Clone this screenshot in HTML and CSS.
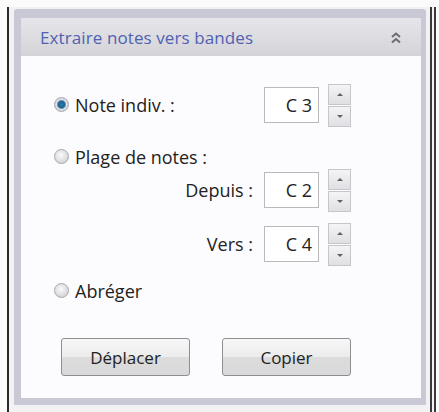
FILE: index.html
```html
<!DOCTYPE html>
<html lang="fr">
<head>
<meta charset="utf-8">
<title>Extraire notes vers bandes</title>
<link rel="stylesheet" href="styles.css">
</head>
<body>
<div class="window">
  <div class="gap">
    <div class="panel">
      <div class="header">
        <span class="title">Extraire notes vers bandes</span>
        <svg class="chev" width="12" height="14" viewBox="0 0 12 14"><path d="M2 6 L6 2.5 L10 6 M2 11.5 L6 8 L10 11.5" fill="none" stroke="#6b6b70" stroke-width="2"/></svg>
      </div>
      <div class="content">
        <div class="row r1">
          <span class="radio on"></span>
          <span class="label">Note indiv. :</span>
          <div class="field"><span class="input">C 3</span><span class="spin"><span class="sb up"></span><span class="sb down"></span></span></div>
        </div>
        <div class="row r2">
          <span class="radio"></span>
          <span class="label">Plage de notes :</span>
        </div>
        <div class="row r3">
          <span class="sublabel">Depuis :</span>
          <div class="field"><span class="input">C 2</span><span class="spin"><span class="sb up"></span><span class="sb down"></span></span></div>
        </div>
        <div class="row r4">
          <span class="sublabel">Vers :</span>
          <div class="field"><span class="input">C 4</span><span class="spin"><span class="sb up"></span><span class="sb down"></span></span></div>
        </div>
        <div class="row r5">
          <span class="radio"></span>
          <span class="label">Abréger</span>
        </div>
        <div class="buttons">
          <button class="btn">Déplacer</button>
          <button class="btn">Copier</button>
        </div>
      </div>
    </div>
  </div>
</div>
</body>
</html>
```
FILE: styles.css
```css
html, body {
  margin: 0;
  padding: 0;
  background: #fbfbfb;
  font-family: "Open Sans", "Noto Sans", sans-serif;
  color: #222;
}
.window {
  margin: 7px 3px 0 7px;
  height: 405px;
  border-left: 2px solid #2a2a2a;
  border-right: 6px double #3a3a3a;
  background: #f2f2f4;
  box-sizing: border-box;
}
.gap {
  padding: 2px 4px 0 5px;
  height: 100%;
  box-sizing: border-box;
}
.panel {
  background: #c9c9d6;
  padding: 9px 5px 7px 7px;
  border-radius: 3px 3px 0 0;
  height: 396px;
  box-sizing: border-box;
  display: flex;
  flex-direction: column;
}
.header {
  height: 38px;
  background: linear-gradient(#e6e6ea, #d3d3d8);
  display: flex;
  align-items: center;
  justify-content: space-between;
  padding: 0 19px 0 19px;
  flex: none;
}
.title {
  color: #4f62b2;
  font-size: 17px;
  letter-spacing: 0.1px;
  margin-top: 1px;
}
.chev {
  display: block;
  margin-top: 1px;
}
.content {
  flex: 1;
  background: #fcfcfe;
  padding: 27px 70px 0 33px;
}
.row {
  display: flex;
  align-items: center;
}
.r1 { height: 44px; }
.r2 { height: 20px; margin-top: 20px; }
.r3 { height: 42px; margin-top: 2px; }
.r4 { height: 42px; margin-top: 12px; }
.r5 { height: 20px; margin-top: 16px; }
.radio {
  width: 13px;
  height: 13px;
  border-radius: 50%;
  border: 1px solid #a8a8ae;
  background: radial-gradient(circle at 45% 40%, #fafafa 0%, #dcdcde 60%, #c4c4c8 100%);
  flex: none;
  margin-top: -2px;
}
.radio.on {
  background: radial-gradient(circle at 50% 50%, #2f7fb4 0, #1d5f8f 3px, #8fb3cc 4.5px, #dfe4e8 5px, #c8cbcf 7px);
}
.label {
  font-size: 18px;
  margin-left: 6px;
  flex: 1;
}
.sublabel {
  font-size: 18px;
  margin-left: auto;
  margin-right: 11px;
}
.field {
  display: flex;
  align-items: center;
}
.input {
  width: 55px;
  height: 36px;
  box-sizing: border-box;
  border: 1px solid #b9b9bd;
  background: #fff;
  font-size: 18px;
  text-align: right;
  padding-right: 6px;
  line-height: 34px;
}
.spin {
  display: flex;
  flex-direction: column;
  margin-left: 9px;
  gap: 1px;
}
.sb {
  width: 23px;
  height: 21px;
  box-sizing: border-box;
  border: 1px solid #c6c6ca;
  background: linear-gradient(#f4f4f6, #e0e0e4);
  display: flex;
  align-items: center;
  justify-content: center;
}
.sb::after {
  content: "";
  border-left: 3px solid transparent;
  border-right: 3px solid transparent;
}
.sb.up::after { border-bottom: 3px solid #606066; }
.sb.down::after { border-top: 3px solid #606066; }
.buttons {
  display: flex;
  gap: 32px;
  margin-top: 37px;
  padding-left: 7px;
}
.btn {
  width: 133px;
  height: 38px;
  border: 1px solid #8e8e92;
  border-radius: 3px;
  background: linear-gradient(#f7f7f7 0%, #ececec 50%, #dcdcdc 51%, #d9d9db 100%);
  font-family: "Open Sans", "Noto Sans", sans-serif;
  font-size: 17px;
  color: #222;
  padding: 0;
}
```
